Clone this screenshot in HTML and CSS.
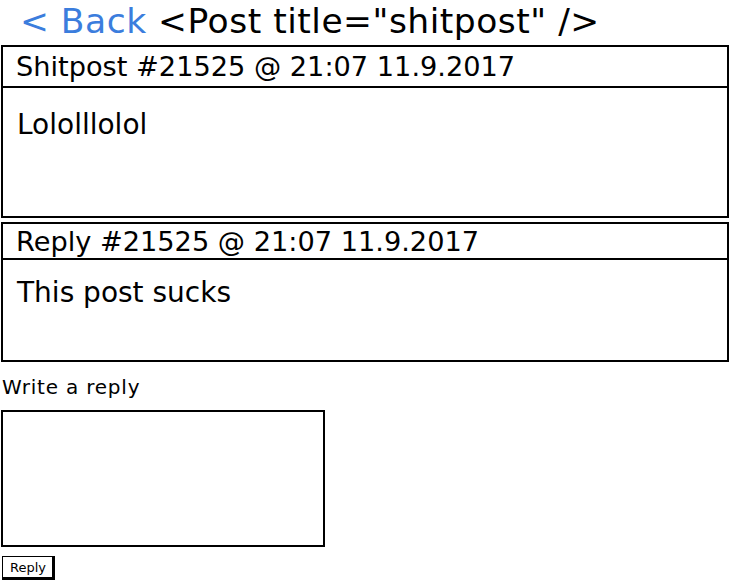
FILE: index.html
```html
<!DOCTYPE html>
<html>
<head>
<meta charset="utf-8">
<link rel="stylesheet" href="styles.css">
</head>
<body>
<div class="page">
  <h1 class="title"><a class="back" href="#">&lt; Back</a> &lt;Post title="shitpost" /&gt;</h1>
  <div class="post">
    <div class="post-head">Shitpost #21525 @ 21:07 11.9.2017</div>
    <div class="post-body post-body-main">Lololllolol</div>
  </div>
  <div class="post reply">
    <div class="post-head reply-head">Reply #21525 @ 21:07 11.9.2017</div>
    <div class="post-body reply-body">This post sucks</div>
  </div>
  <div class="write-label">Write a reply</div>
  <div class="textarea"></div>
  <button class="btn">Reply</button>
</div>
</body>
</html>
```
FILE: styles.css
```css
html, body {
  margin: 0;
  padding: 0;
  background: #fff;
}
body {
  font-family: "DejaVu Sans", "Liberation Sans", sans-serif;
  color: #000;
}
.page {
  width: 731px;
  height: 583px;
  overflow: hidden;
  display: flex;
  flex-direction: column;
}
.title {
  margin: 0;
  font-weight: normal;
  font-size: 34.5px;
  line-height: 42px;
  height: 45px;
  padding-left: 20px;
  white-space: nowrap;
  letter-spacing: 0.5px;
}
.back {
  color: #3b7ddd;
  text-decoration: none;
}
.post {
  margin-left: 1px;
  width: 728px;
  display: flex;
  flex-direction: column;
}
.post-head {
  border: 2px solid #000;
  height: 39px;
  font-size: 27.2px;
  line-height: 40px;
  padding-left: 13px;
  white-space: nowrap;
}
.post-body {
  border: 2px solid #000;
  border-top: none;
  padding-left: 14px;
  font-size: 28px;
}
.post-body-main {
  height: 128px;
  line-height: 74px;
}
.reply {
  margin-top: 4px;
}
.reply-head {
  height: 34px;
  line-height: 36px;
}
.reply-body {
  height: 100px;
  line-height: 66px;
}
.write-label {
  margin-top: 13px;
  font-size: 20px;
  line-height: 24px;
  padding-left: 2px;
  letter-spacing: 0.8px;
}
.textarea {
  margin-top: 11px;
  margin-left: 1px;
  width: 320px;
  height: 133px;
  border: 2px solid #000;
}
.btn {
  margin-top: 9px;
  margin-left: 2px;
  align-self: flex-start;
  width: 53px;
  height: 24px;
  padding: 0 0 0 7px;
  text-align: left;
  background: #fff;
  border: 1px solid #000;
  border-right: 3px solid #000;
  border-bottom: 3px solid #000;
  font-family: "DejaVu Sans", sans-serif;
  font-size: 13px;
  color: #000;
}
```
